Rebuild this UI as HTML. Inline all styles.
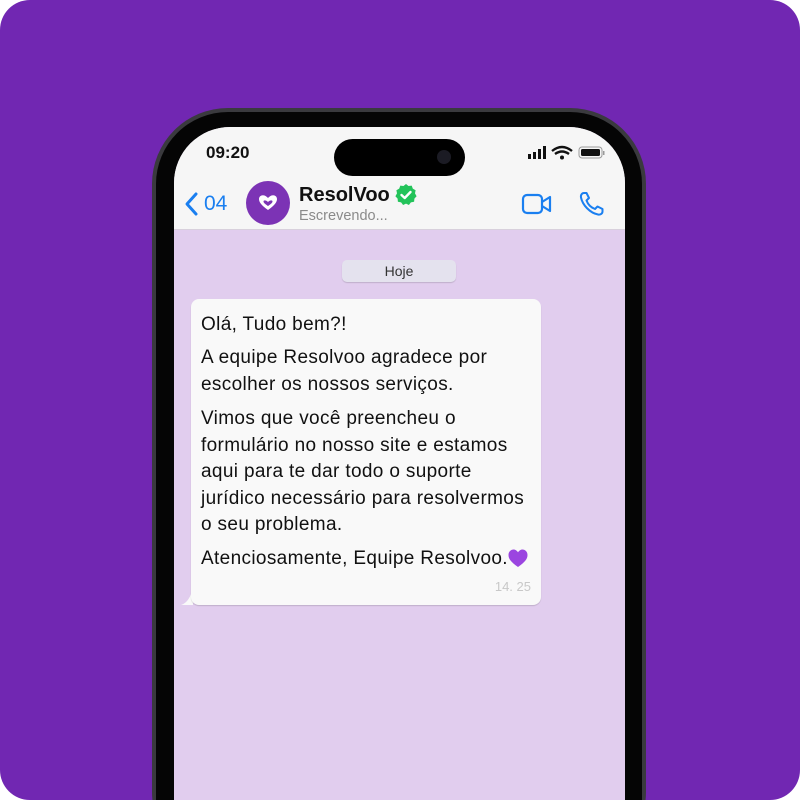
<!DOCTYPE html>
<html><head><style>
*{margin:0;padding:0;box-sizing:border-box}
html,body{width:800px;height:800px;overflow:hidden}
body{background:#fff;font-family:"Liberation Sans","DejaVu Sans",sans-serif}
.bg{position:absolute;left:0;top:0;width:800px;height:800px;background:#7127b2;border-radius:30px;overflow:hidden}
.frame{position:absolute;left:152px;top:108px;width:494px;height:760px;border-radius:76px;background:#3a3a3e;}
.frame2{position:absolute;left:156px;top:112px;width:486px;height:760px;border-radius:72px;background:#050505;}
.screen{position:absolute;left:174px;top:127px;width:451px;height:740px;border-radius:56px;background:#e1cdee;overflow:hidden}
.hdr{position:absolute;left:0;top:0;width:451px;height:103px;background:#f6f6f6;border-bottom:1px solid #d8d0dc}
.time{position:absolute;left:32px;top:16px;font-weight:bold;font-size:17px;color:#111}
.island{position:absolute;left:160px;top:12px;width:131px;height:37px;border-radius:19px;background:#000}
.cam{position:absolute;left:263px;top:23px;width:14px;height:14px;border-radius:50%;background:#1b1b24}
.pill{position:absolute;left:168px;top:133px;width:114px;height:22px;border-radius:5px;background:#e4e2ee;text-align:center;font-size:14px;line-height:22px;color:#333;box-shadow:0 1px 1px rgba(0,0,0,.15)}
.bub{position:absolute;left:17px;top:172px;width:350px;height:306px;background:#f9f9f9;border-radius:8px;box-shadow:0 1px 1px rgba(0,0,0,.15)}
.bub p{position:absolute;left:10px;font-size:19px;letter-spacing:0.35px;color:#111;white-space:nowrap;line-height:26.5px}
</style></head><body>
<div class="bg">
<div class="frame"></div>
<div class="frame2"></div>
<div class="screen">
 <div class="hdr">
  <div class="time">09:20</div>
  <div class="island"></div><div class="cam"></div>
  <svg style="position:absolute;left:352px;top:18px" width="80" height="16" viewBox="0 0 80 16">
   <rect x="2" y="9" width="3" height="5" fill="#111"/><rect x="7" y="7" width="3" height="7" fill="#111"/><rect x="12" y="4" width="3" height="10" fill="#111"/><rect x="17" y="1" width="3" height="13" fill="#111"/>
   <path d="M26 6 Q36 -2 46 6 M29 9 Q36 4 43 9" stroke="#111" stroke-width="2.4" fill="none"/><circle cx="36" cy="12.5" r="2" fill="#111"/>
   <rect x="53" y="2" width="23" height="11" rx="3" fill="none" stroke="#999" stroke-width="1"/><rect x="55" y="4" width="19" height="7" rx="1.5" fill="#111"/><rect x="77" y="6" width="1.5" height="4" fill="#999"/>
  </svg>
  <svg style="position:absolute;left:8px;top:64px" width="20" height="26" viewBox="0 0 20 26"><path d="M14 3 L5 13 L14 23" stroke="#1a7ff0" stroke-width="3" fill="none" stroke-linecap="round" stroke-linejoin="round"/></svg>
  <div style="position:absolute;left:30px;top:65px;font-size:21px;color:#1a7ff0">04</div>
  <div style="position:absolute;left:72px;top:54px;width:44px;height:44px;border-radius:50%;background:#7c33b5"></div>
  <svg style="position:absolute;left:83px;top:66px" width="22" height="20" viewBox="0 0 22 20"><path d="M11 17 C4 12 2 9 2 6 C2 3 5 1.5 7.5 2.5 C9 3 10 4 11 5 C12 4 13 3 14.5 2.5 C17 1.5 20 3 20 6 C20 9 18 12 11 17Z M11 9 C9 7 6.5 7 6.5 8.5 C6.5 10 9 11.5 11 13 C13 11.5 15.5 10 15.5 8.5 C15.5 7 13 7 11 9Z" fill="#fff" fill-rule="evenodd"/></svg>
  <div style="position:absolute;left:125px;top:57px;font-size:20px;font-weight:bold;color:#111">ResolVoo</div>
  <svg style="position:absolute;left:220px;top:56px" width="24" height="24" viewBox="0 0 24 24"><path d="M12 1 L14.5 3 L17.7 2.6 L18.8 5.6 L21.6 7.2 L21 10.4 L22.6 13.2 L20.4 15.6 L20.1 18.8 L16.9 19.4 L14.9 22 L12 20.6 L9.1 22 L7.1 19.4 L3.9 18.8 L3.6 15.6 L1.4 13.2 L3 10.4 L2.4 7.2 L5.2 5.6 L6.3 2.6 L9.5 3Z" fill="#23c35a"/><path d="M7.5 12 L10.7 15 L16.5 9" stroke="#fff" stroke-width="2.4" fill="none" stroke-linecap="round" stroke-linejoin="round"/></svg>
  <div style="position:absolute;left:125px;top:81px;font-size:14.5px;color:#8a8a8a">Escrevendo...</div>
  <svg style="position:absolute;left:347px;top:65px" width="32" height="24" viewBox="0 0 32 24"><rect x="2" y="3" width="19" height="18" rx="4" fill="none" stroke="#1a7ff0" stroke-width="2.2"/><path d="M21 10 L29 5 L29 19 L21 14" fill="none" stroke="#1a7ff0" stroke-width="2.2" stroke-linejoin="round"/></svg>
  <svg style="position:absolute;left:404px;top:63px" width="28" height="28" viewBox="0 0 28 28"><path d="M6 3 C4 3 2.5 5 3 7.5 C4.5 15 12 23 20 24.5 C22.5 25 24.5 23.5 24.5 21.5 L24.5 19 L19.5 16.5 L17 19 C13 17.5 10 14.5 8.5 10.5 L11 8 L8.5 3Z" fill="none" stroke="#1a7ff0" stroke-width="2" stroke-linejoin="round"/></svg>
 </div>
 <div class="pill">Hoje</div>
 <svg style="position:absolute;left:5px;top:460px" width="20" height="20" viewBox="0 0 20 20"><path d="M14 0 L14 18 L2 18 C8 16 12 10 14 0Z" fill="#f9f9f9"/></svg>
 <div class="bub">
  <p style="top:13px">Olá, Tudo bem?!</p>
  <p style="top:46px">A equipe Resolvoo agradece por<br>escolher os nossos serviços.</p>
  <p style="top:107px">Vimos que você preencheu o<br>formulário no nosso site e estamos<br>aqui para te dar todo o suporte<br>jurídico necessário para resolvermos<br>o seu problema.</p>
  <p style="top:247px">Atenciosamente, Equipe Resolvoo.</p>
  <svg style="position:absolute;left:317px;top:250px" width="20" height="19" viewBox="0 0 20 19"><path d="M10 18 C3 13 0.5 10 0.5 6 C0.5 2.5 3 0.5 5.5 0.5 C7.5 0.5 9 1.8 10 3.3 C11 1.8 12.5 0.5 14.5 0.5 C17 0.5 19.5 2.5 19.5 6 C19.5 10 17 13 10 18Z" fill="#9b45e0"/></svg>
  <div style="position:absolute;right:10px;top:280px;font-size:13px;color:#c8c8c8">14. 25</div>
 </div>
</div>
</div>
</body></html>
